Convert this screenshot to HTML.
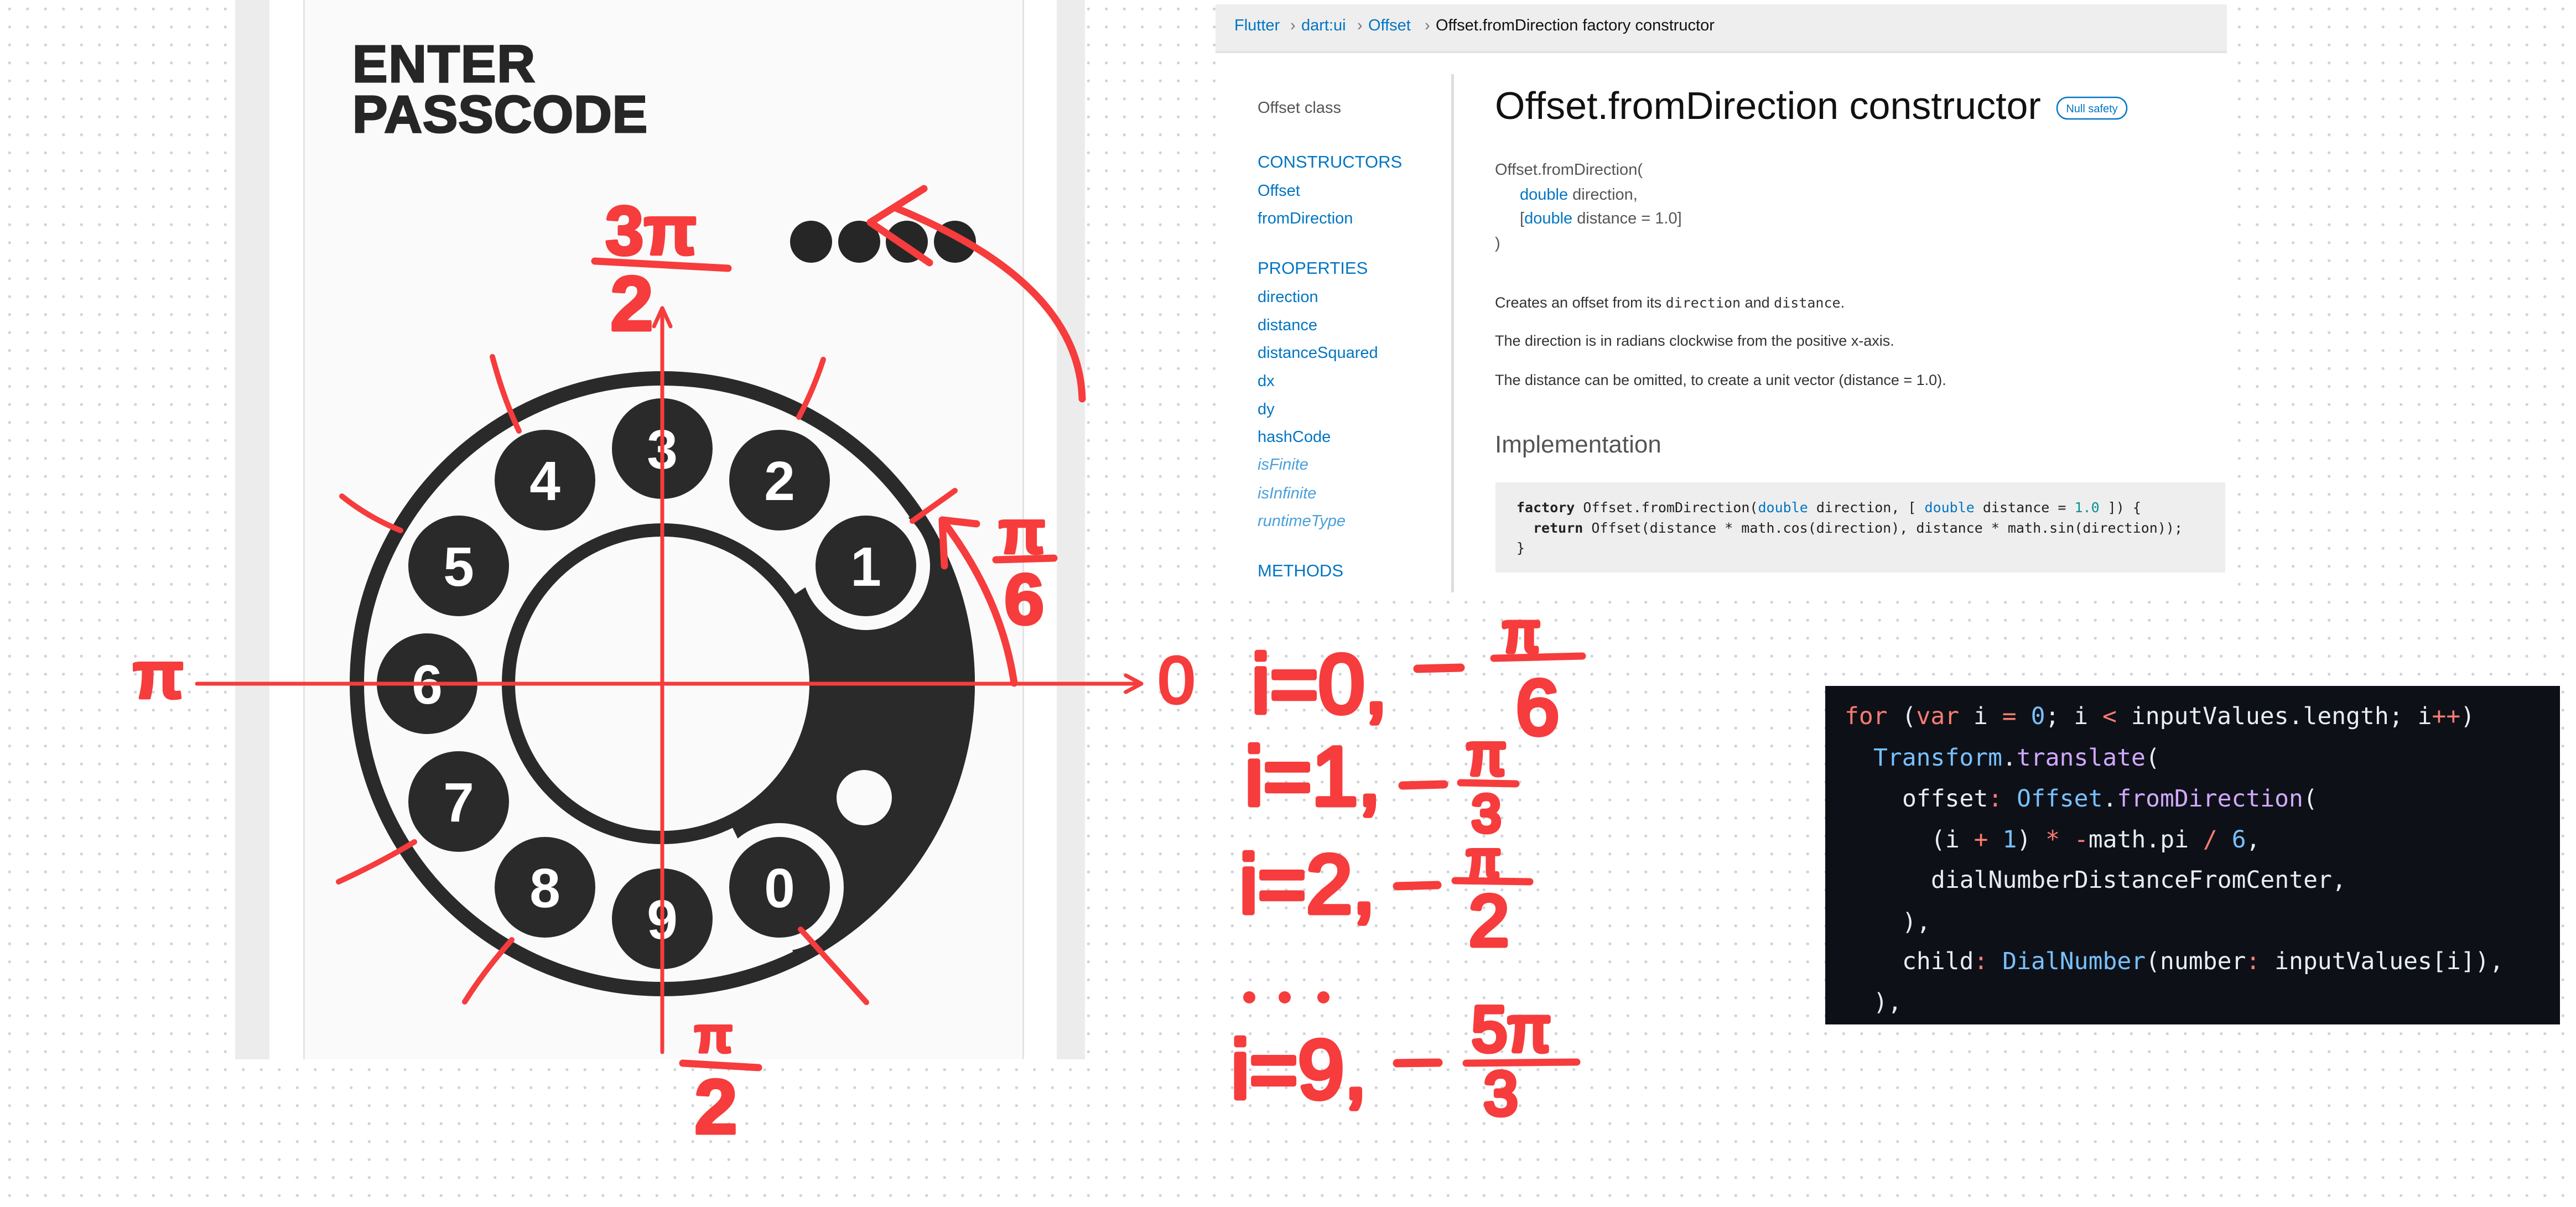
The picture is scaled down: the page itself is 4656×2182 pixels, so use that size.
<!DOCTYPE html>
<html><head><meta charset="utf-8">
<style>
html,body{margin:0;padding:0;}
body{width:4656px;height:2182px;position:relative;overflow:hidden;background:#fff;
background-image:radial-gradient(circle,#cfd4da 2.3px,rgba(255,255,255,0) 3px);background-size:32.5px 32.5px;background-position:1px 0px;}
svg{position:absolute;left:0;top:0;}
</style></head><body>
<svg width="4656" height="2182" viewBox="0 0 4656 2182" xmlns="http://www.w3.org/2000/svg">
<defs>
<clipPath id="sec"><path d="M1665.4,920.1 A565,565 0 0 1 1444.7,1743.8 L1313.6,1475.1 A266,266 0 0 0 1417.5,1087.3 Z"/></clipPath>
</defs>
<!-- phone -->
<rect x="425" y="0" width="1536" height="1915" fill="#ececec"/>
<rect x="487" y="0" width="1423" height="1915" fill="#ffffff"/>
<rect x="548" y="0" width="1303" height="1915" fill="#fafafa"/>
<rect x="548" y="0" width="3" height="1915" fill="#e4e4e4"/>
<rect x="1848" y="0" width="3" height="1915" fill="#e4e4e4"/>
<g font-family="Liberation Sans, sans-serif" font-weight="bold" fill="#262626" stroke="#262626" stroke-width="3">
<text x="637" y="148" font-size="95" letter-spacing="2">ENTER</text>
<text x="637" y="239" font-size="95" letter-spacing="1">PASSCODE</text>
</g>
<g fill="#262626">
<circle cx="1466" cy="437" r="38"/><circle cx="1553" cy="437" r="38"/><circle cx="1639" cy="437" r="38"/><circle cx="1726" cy="437" r="38"/>
</g>
<!-- dial -->
<circle cx="1197" cy="1236" r="552" fill="none" stroke="#2a2a2a" stroke-width="26"/>
<path d="M1686.3,953.5 A565,565 0 0 1 1479.5,1725.3 L1332,1469.8 A270,270 0 0 0 1430.8,1101 Z" fill="#2a2a2a"/>
<g clip-path="url(#sec)" fill="#2a2a2a">
<circle cx="1565" cy="1023" r="140"/>
<circle cx="1409" cy="1604" r="140"/>
</g>
<circle cx="1197" cy="1236" r="278" fill="#fafafa" stroke="#2a2a2a" stroke-width="24"/>
<circle cx="1565" cy="1023" r="116" fill="#fafafa"/>
<circle cx="1409" cy="1604" r="116" fill="#fafafa"/>
<circle cx="1562" cy="1442" r="50" fill="#fafafa"/>
<g fill="#2a2a2a">
<circle cx="1565" cy="1023" r="91"/><circle cx="1409" cy="868" r="91"/><circle cx="1197" cy="811" r="91"/>
<circle cx="985" cy="868" r="91"/><circle cx="829" cy="1023" r="91"/><circle cx="772" cy="1236" r="91"/>
<circle cx="829" cy="1449" r="91"/><circle cx="985" cy="1604" r="91"/><circle cx="1197" cy="1661" r="91"/>
<circle cx="1409" cy="1604" r="91"/>
</g>
<g font-family="Liberation Sans, sans-serif" font-weight="bold" fill="#ffffff" font-size="100" text-anchor="middle">
<text x="1565" y="1059">1</text><text x="1409" y="904">2</text><text x="1197" y="847">3</text>
<text x="985" y="904">4</text><text x="829" y="1059">5</text><text x="772" y="1272">6</text>
<text x="829" y="1485">7</text><text x="985" y="1640">8</text><text x="1197" y="1697">9</text>
<text x="1409" y="1640">0</text>
</g>
<!-- red annotations -->
<g stroke="#f63c3c" fill="none" stroke-linecap="round" stroke-linejoin="round">
<line x1="356" y1="1236" x2="2063" y2="1236" stroke-width="7"/>
<polyline points="2035,1221 2063,1236 2035,1251" stroke-width="7"/>
<line x1="1197" y1="1902" x2="1197" y2="557" stroke-width="7"/>
<polyline points="1182,590 1197,557 1212,590" stroke-width="7"/>
<g stroke-width="10">
<path d="M890,645 Q910,720 938,779"/>
<path d="M1488,650 Q1470,705 1444,754"/>
<path d="M618,897 Q665,935 724,959"/>
<line x1="1726" y1="887" x2="1649" y2="942"/>
<path d="M749,1522 Q690,1558 612,1594"/>
<path d="M925,1699 Q875,1755 840,1811"/>
<line x1="1447" y1="1680" x2="1566" y2="1812"/>
</g>
<g stroke-width="13">
<path d="M1833,1235 Q1810,1080 1703,940"/>
<polyline points="1765,947 1703,940 1707,1023"/>
<path d="M1619,376 Q1950,511 1956,721"/>
<polyline points="1670,341 1573,402 1680,475"/>
<line x1="1075" y1="472" x2="1316" y2="485"/>
<line x1="1800" y1="1012" x2="1905" y2="1009"/>
<line x1="1234" y1="1922" x2="1371" y2="1930"/>
<line x1="2562" y1="1209" x2="2640" y2="1207" stroke-width="15"/>
<line x1="2700" y1="1190" x2="2860" y2="1186"/>
<line x1="2535" y1="1420" x2="2610" y2="1418" stroke-width="15"/>
<line x1="2640" y1="1415" x2="2740" y2="1417"/>
<line x1="2525" y1="1602" x2="2598" y2="1600" stroke-width="15"/>
<line x1="2630" y1="1592" x2="2765" y2="1594"/>
<line x1="2525" y1="1922" x2="2600" y2="1921" stroke-width="15"/>
<line x1="2650" y1="1922" x2="2850" y2="1920"/>
</g>
</g>
<g fill="#f63c3c" stroke="#f63c3c" stroke-width="5" stroke-linejoin="round" font-family="Liberation Sans, sans-serif" font-weight="bold">
<text x="1094" y="460" font-size="125">3π</text>
<text x="1103" y="597" font-size="140">2</text>
<text x="240" y="1262" font-size="120">π</text>
<text x="2093" y="1271" font-size="120" font-weight="normal">0</text>
<text x="1805" y="1000" font-size="110">π</text>
<text x="1815" y="1128" font-size="130">6</text>
<text x="1255" y="1902" font-size="90">π</text>
<text x="1255" y="2049" font-size="140">2</text>
</g>
<g fill="#f63c3c" stroke="#f63c3c" stroke-width="9" stroke-linejoin="round" font-family="Liberation Sans, sans-serif">
<text x="2262" y="1288" font-size="150">i=0,</text>
<text x="2715" y="1178" font-size="100">π</text>
<text x="2740" y="1327" font-size="140">6</text>
<text x="2250" y="1455" font-size="150">i=1,</text>
<text x="2650" y="1400" font-size="105">π</text>
<text x="2660" y="1503" font-size="95">3</text>
<text x="2240" y="1650" font-size="150">i=2,</text>
<text x="2650" y="1585" font-size="90">π</text>
<text x="2655" y="1709" font-size="130">2</text>
<text x="2225" y="1985" font-size="150">i=9,</text>
<text x="2660" y="1900" font-size="115">5π</text>
<text x="2682" y="2015" font-size="110">3</text>
</g>
<g fill="#f63c3c"><circle cx="2258" cy="1803" r="11"/><circle cx="2322" cy="1803" r="11"/><circle cx="2392" cy="1803" r="11"/></g>

<!-- docs panel -->
<rect x="2197" y="8" width="1828" height="1067" fill="#ffffff"/>
<rect x="2197" y="8" width="1828" height="84" fill="#eeeeee"/>
<rect x="2197" y="92" width="1828" height="4" fill="#e4e4e4"/>
<g font-family="Liberation Sans, sans-serif" font-size="29">
<text x="2231" y="55" fill="#0175c2">Flutter</text>
<text x="2332" y="55" fill="#777">›</text>
<text x="2352" y="55" fill="#0175c2">dart:ui</text>
<text x="2453" y="55" fill="#777">›</text>
<text x="2473" y="55" fill="#0175c2">Offset</text>
<text x="2575" y="55" fill="#777">›</text>
<text x="2595" y="55" fill="#111">Offset.fromDirection factory constructor</text>
</g>
<rect x="2623" y="134" width="5" height="937" fill="#dddddd"/>
<g font-family="Liberation Sans, sans-serif" font-size="29" fill="#0175c2">
<text x="2273" y="204" fill="#555">Offset class</text>
<text x="2273" y="303" font-size="31">CONSTRUCTORS</text>
<text x="2273" y="354">Offset</text>
<text x="2273" y="404">fromDirection</text>
<text x="2273" y="495" font-size="31">PROPERTIES</text>
<text x="2273" y="546">direction</text>
<text x="2273" y="597">distance</text>
<text x="2273" y="647">distanceSquared</text>
<text x="2273" y="698">dx</text>
<text x="2273" y="749">dy</text>
<text x="2273" y="799">hashCode</text>
<g fill="#4a9fdc" font-style="italic">
<text x="2273" y="849">isFinite</text>
<text x="2273" y="901">isInfinite</text>
<text x="2273" y="951">runtimeType</text>
</g>
<text x="2273" y="1042" font-size="31">METHODS</text>
</g>
<text x="2702" y="215" font-family="Liberation Sans, sans-serif" font-size="70" fill="#111">Offset.fromDirection constructor</text>
<rect x="3718" y="176" width="126" height="39" rx="19" fill="none" stroke="#0175c2" stroke-width="2.5"/>
<text x="3781" y="203" text-anchor="middle" font-family="Liberation Sans, sans-serif" font-size="20" fill="#0175c2">Null safety</text>
<g font-family="Liberation Sans, sans-serif" font-size="29" fill="#555">
<text x="2702" y="316">Offset.fromDirection(</text>
<text x="2747" y="361"><tspan fill="#0175c2">double</tspan> direction,</text>
<text x="2747" y="404">[<tspan fill="#0175c2">double</tspan> distance = 1.0]</text>
<text x="2702" y="449">)</text>
</g>
<g font-family="Liberation Sans, sans-serif" font-size="27" fill="#333">
<text x="2702" y="556">Creates an offset from its <tspan font-family="DejaVu Sans Mono, monospace" font-size="25">direction</tspan> and <tspan font-family="DejaVu Sans Mono, monospace" font-size="25">distance</tspan>.</text>
<text x="2702" y="625">The direction is in radians clockwise from the positive x-axis.</text>
<text x="2702" y="696">The distance can be omitted, to create a unit vector (distance = 1.0).</text>
</g>
<text x="2702" y="818" font-family="Liberation Sans, sans-serif" font-size="44" fill="#555">Implementation</text>
<rect x="2703" y="872" width="1319" height="163" fill="#eeeeee"/>
<g font-family="DejaVu Sans Mono, monospace" font-size="25" fill="#222">
<text x="2741" y="926"><tspan font-weight="bold">factory</tspan> Offset.fromDirection(<tspan fill="#0175c2">double</tspan> direction, [ <tspan fill="#0175c2">double</tspan> distance = <tspan fill="#0a8f8f">1.0</tspan> ]) {</text>
<text x="2771" y="963"><tspan font-weight="bold">return</tspan> Offset(distance * math.cos(direction), distance * math.sin(direction));</text>
<text x="2741" y="999">}</text>
</g>

<!-- dark code panel -->
<rect x="3299" y="1240" width="1328" height="612" fill="#0d1117"/>
<g font-family="DejaVu Sans Mono, monospace" font-size="43" fill="#e6edf3">
<text x="3334" y="1309"><tspan fill="#ff7b72">for</tspan> (<tspan fill="#ff7b72">var</tspan> i <tspan fill="#ff7b72">=</tspan> <tspan fill="#79c0ff">0</tspan>; i <tspan fill="#ff7b72">&lt;</tspan> inputValues.length; i<tspan fill="#ff7b72">++</tspan>)</text>
<text x="3386" y="1384"><tspan fill="#79c0ff">Transform</tspan>.<tspan fill="#d2a8ff">translate</tspan>(</text>
<text x="3438" y="1458">offset<tspan fill="#ff7b72">:</tspan> <tspan fill="#79c0ff">Offset</tspan>.<tspan fill="#d2a8ff">fromDirection</tspan>(</text>
<text x="3490" y="1532">(i <tspan fill="#ff7b72">+</tspan> <tspan fill="#79c0ff">1</tspan>) <tspan fill="#ff7b72">*</tspan> <tspan fill="#ff7b72">-</tspan>math.pi <tspan fill="#ff7b72">/</tspan> <tspan fill="#79c0ff">6</tspan>,</text>
<text x="3490" y="1605">dialNumberDistanceFromCenter,</text>
<text x="3438" y="1681">),</text>
<text x="3438" y="1752">child<tspan fill="#ff7b72">:</tspan> <tspan fill="#79c0ff">DialNumber</tspan>(number<tspan fill="#ff7b72">:</tspan> inputValues[i]),</text>
<text x="3386" y="1826">),</text>
</g>
</svg>
</body></html>
